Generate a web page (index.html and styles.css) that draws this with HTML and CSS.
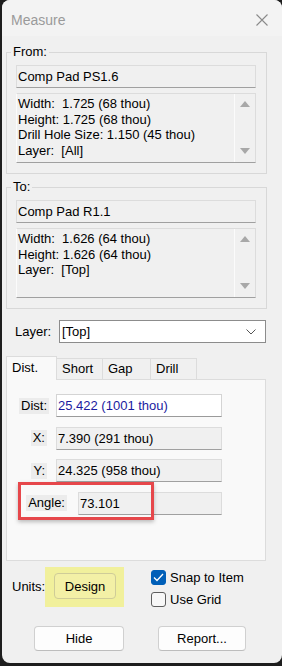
FILE: index.html
```html
<!DOCTYPE html>
<html>
<head>
  <meta charset="UTF-8">
  <title>Measure</title>
  <link rel="stylesheet" href="styles.css">
</head>
<body>
  <div class="window">
    <div class="titlebar">
      <span class="title">Measure</span>
      <svg class="close" width="12" height="12" viewBox="0 0 12 12">
        <path d="M0.5 0.5 L11.5 11.5 M11.5 0.5 L0.5 11.5" stroke="#8a8a8a" stroke-width="1.1" fill="none"/>
      </svg>
    </div>

    <fieldset class="group">
      <legend>From:</legend>
      <div class="field field-ro">Comp Pad PS1.6</div>
      <div class="listbox">
        <div class="list-lines">
          <div>Width:  1.725 (68 thou)</div>
          <div>Height: 1.725 (68 thou)</div>
          <div>Drill Hole Size: 1.150 (45 thou)</div>
          <div>Layer:  [All]</div>
        </div>
        <div class="scroll"><span class="arrow-up"></span><span class="arrow-down"></span></div>
      </div>
    </fieldset>

    <fieldset class="group group-to">
      <legend>To:</legend>
      <div class="field field-ro">Comp Pad R1.1</div>
      <div class="listbox">
        <div class="list-lines">
          <div>Width:  1.626 (64 thou)</div>
          <div>Height: 1.626 (64 thou)</div>
          <div>Layer:  [Top]</div>
        </div>
        <div class="scroll"><span class="arrow-up"></span><span class="arrow-down"></span></div>
      </div>
    </fieldset>

    <div class="layer-row">
      <span class="layer-label">Layer:</span>
      <div class="select">
        <span>[Top]</span>
        <svg width="10" height="6" viewBox="0 0 10 6"><path d="M0.5 0.5 L5 5 L9.5 0.5" stroke="#555" stroke-width="1" fill="none"/></svg>
      </div>
    </div>

    <div class="tabs">
      <div class="tab tab-active">Dist.</div>
      <div class="tab tab-short">Short</div>
      <div class="tab tab-gap">Gap</div>
      <div class="tab tab-drill">Drill</div>
    </div>
    <div class="pane">
      <div class="row">
        <div class="row-label lbl-dist"><span>Dist:</span></div>
        <div class="field field-edit">25.422 (1001 thou)</div>
      </div>
      <div class="row">
        <div class="row-label lbl-xy"><span>X:</span></div>
        <div class="field field-ro">7.390 (291 thou)</div>
      </div>
      <div class="row">
        <div class="row-label lbl-xy"><span>Y:</span></div>
        <div class="field field-ro">24.325 (958 thou)</div>
      </div>
      <div class="row">
        <div class="row-label lbl-angle"><span>Angle:</span></div>
        <div class="field field-ro field-angle">73.101</div>
      </div>
      <div class="callout"></div>
    </div>

    <div class="units-row">
      <span class="units-label">Units:</span>
      <div class="highlight"><button class="btn btn-design">Design</button></div>
      <div class="checks">
        <div class="check"><span class="box box-on"><svg width="11" height="9" viewBox="0 0 11 9"><path d="M1 4.5 L4 7.5 L10 1" stroke="#fff" stroke-width="1.3" fill="none"/></svg></span>Snap to Item</div>
        <div class="check"><span class="box"></span>Use Grid</div>
      </div>
    </div>

    <div class="buttons">
      <button class="btn btn-hide">Hide</button>
      <button class="btn btn-report">Report...</button>
    </div>
  </div>
</body>
</html>
```

FILE: styles.css
```css
html, body { margin: 0; height: 100%; background: #1e1e1e; }
body { font-family: "Liberation Sans", Arial, sans-serif; font-size: 13px; color: #000; }

.window {
  margin-left: 2px;
  width: 280px;
  height: 663px;
  background: #f0f0f0;
  border-radius: 8px;
  overflow: hidden;
}

.titlebar {
  height: 36px;
  box-sizing: border-box;
  padding: 3px 14px 0 9px;
  display: flex;
  align-items: center;
  justify-content: space-between;
  background: #f3f3f3;
}
.title { font-size: 14px; color: #9a9a9a; }

.group {
  box-sizing: border-box;
  width: 261px;
  margin: 8px 0 0 4px;
  padding: 5px 10px 10px 9px;
  border: 1px solid #d8d8d8;
  min-width: 0;
}
.group-to { margin-top: 5px; }
.group legend { margin-left: -5px; padding: 0 2px; line-height: 16px; }

.field {
  box-sizing: border-box;
  height: 23px;
  line-height: 21px;
  padding: 0 1px;
  border: 1px solid #dcdcdc;
  border-bottom-color: #a0a0a0;
  white-space: nowrap;
}
.field-ro { background: #f0f0f0; }
.field-edit { background: #fff; color: #1a1aa0; border-color: #d4d4d4; border-bottom-color: #9a9a9a; }

.listbox {
  display: flex;
  box-sizing: border-box;
  height: 70px;
  margin-top: 5px;
  border: 1px solid #dcdcdc;
  border-left-color: #fbfbfb;
  border-bottom-color: #a0a0a0;
}
.list-lines { flex: 1; padding: 2px 0 0 1px; line-height: 15.7px; }
.list-lines div { white-space: pre; }
.scroll {
  width: 20px;
  border-left: 1px solid #fbfbfb;
  display: flex;
  flex-direction: column;
  align-items: center;
  justify-content: space-between;
  padding: 7px 0 8px;
}
.arrow-up, .arrow-down { width: 0; height: 0; border-left: 5px solid transparent; border-right: 5px solid transparent; }
.arrow-up { border-bottom: 6px solid #a8a8a8; }
.arrow-down { border-top: 6px solid #a8a8a8; }

.layer-row { display: flex; align-items: center; margin: 11px 0 0 13px; }
.layer-label { width: 44px; }
.select {
  box-sizing: border-box;
  width: 207px;
  height: 23px;
  padding: 0 9px 0 2px;
  background: #fff;
  border: 1px solid #8c8c8c;
  display: flex;
  align-items: center;
  justify-content: space-between;
}

.tabs { display: flex; align-items: flex-end; height: 23px; margin: 13px 0 0 4px; }
.tab {
  box-sizing: border-box;
  height: 21px;
  line-height: 20px;
  padding-left: 5px;
  background: #f0f0f0;
  border: 1px solid #dcdcdc;
  border-bottom: none;
  margin-left: -1px;
}
.tab-active {
  position: relative;
  z-index: 1;
  height: 24px;
  line-height: 22px;
  margin: 0 0 -1px 0;
  width: 51px;
  background: #f9f9f9;
}
.tab-short { width: 47px; }
.tab-gap { width: 49px; }
.tab-drill { width: 47px; }

.pane {
  position: relative;
  box-sizing: border-box;
  width: 260px;
  height: 182px;
  margin-left: 4px;
  padding-top: 14px;
  background: #f9f9f9;
  border: 1px solid #dcdcdc;
}
.row { display: flex; align-items: center; height: 23px; margin-bottom: 9.5px; }
.row-label { display: flex; justify-content: flex-end; }
.row-label span { background: #ececec; padding: 0 2px; line-height: 16px; }
.lbl-dist { width: 42px; padding-right: 7px; }
.lbl-xy { width: 40px; padding-right: 9px; }
.lbl-angle { width: 60px; padding-right: 11px; }
.row .field { width: 166px; }
.row .field-angle { width: 144px; }

.callout {
  position: absolute;
  left: 11px;
  top: 102px;
  width: 136px;
  height: 38px;
  box-sizing: border-box;
  border: 3px solid #e6474b;
  box-shadow: 0 2px 4px rgba(0, 0, 0, 0.25);
}

.units-row { display: flex; align-items: flex-start; margin: 6px 0 0 10px; }
.units-label { width: 33px; line-height: 40px; }
.highlight { background: #f1f09c; padding: 6px 8px 8px 9px; }
.checks { margin: -1px 0 0 27px; }
.check { display: flex; align-items: center; height: 22px; }
.box {
  box-sizing: border-box;
  width: 15px;
  height: 15px;
  margin-right: 4px;
  border: 1px solid #5e5e5e;
  border-radius: 3px;
  background: #f7f7f7;
  display: flex;
  align-items: center;
  justify-content: center;
}
.box-on { background: #005fb8; border-color: #005fb8; }

.btn {
  box-sizing: border-box;
  height: 25px;
  font-family: inherit;
  font-size: 13px;
  color: #000;
  background: #fdfdfd;
  border: 1px solid #d0d0d0;
  border-bottom-color: #bdbdbd;
  border-radius: 4px;
  padding: 0;
}
.btn-design { width: 62px; height: 26px; background: #f3f0a6; border-color: #cfcc98; }
.buttons { display: flex; gap: 34px; margin: 16px 0 0 32px; }
.btn-hide { width: 90px; }
.btn-report { width: 88px; }
```
